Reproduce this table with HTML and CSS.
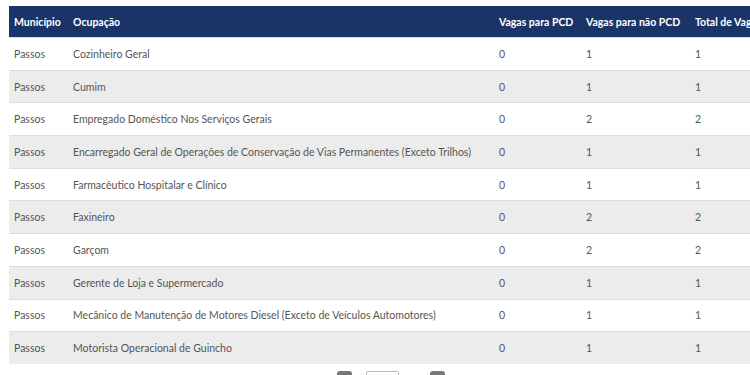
FILE: index.html
```html
<!DOCTYPE html>
<html lang="pt-BR">
<head>
<meta charset="utf-8">
<link rel="stylesheet" href="styles.css">
</head>
<body>
<div class="wrap">
<table class="grid">
<thead>
<tr><th class="c1"><span class="clip">Município</span></th><th class="c2">Ocupação</th><th class="c3">Vagas para PCD</th><th class="c4">Vagas para não PCD</th><th class="c5">Total de Vagas</th></tr>
</thead>
<tbody>
<tr><td>Passos</td><td>Cozinheiro Geral</td><td>0</td><td>1</td><td>1</td></tr>
<tr><td>Passos</td><td>Cumim</td><td>0</td><td>1</td><td>1</td></tr>
<tr><td>Passos</td><td>Empregado Doméstico Nos Serviços Gerais</td><td>0</td><td>2</td><td>2</td></tr>
<tr><td>Passos</td><td>Encarregado Geral de Operações de Conservação de Vias Permanentes (Exceto Trilhos)</td><td>0</td><td>1</td><td>1</td></tr>
<tr><td>Passos</td><td>Farmacêutico Hospitalar e Clínico</td><td>0</td><td>1</td><td>1</td></tr>
<tr><td>Passos</td><td>Faxineiro</td><td>0</td><td>2</td><td>2</td></tr>
<tr><td>Passos</td><td>Garçom</td><td>0</td><td>2</td><td>2</td></tr>
<tr><td>Passos</td><td>Gerente de Loja e Supermercado</td><td>0</td><td>1</td><td>1</td></tr>
<tr><td>Passos</td><td>Mecânico de Manutenção de Motores Diesel (Exceto de Veículos Automotores)</td><td>0</td><td>1</td><td>1</td></tr>
<tr><td>Passos</td><td>Motorista Operacional de Guincho</td><td>0</td><td>1</td><td>1</td></tr>
</tbody>
</table>
<div class="pager">
<span class="pbtn"></span>
<span class="pinput"></span>
<span class="pbtn next"></span>
</div>
</div>
</body>
</html>
```
FILE: styles.css
```css
html, body { margin: 0; padding: 0; background: #fff; overflow: hidden; }
body { width: 750px; height: 375px; font-family: "Lato", "Liberation Sans", sans-serif; }
.wrap { padding: 6px 0 0 9px; width: 820px; }
.grid { border-collapse: collapse; width: 820px; table-layout: fixed; font-size: 10.5px; color: #555; }
.grid th { background: #1b3467; color: #fff; font-weight: 700; text-align: left; height: 31px; padding: 0 0 0 5px; white-space: nowrap; overflow: hidden; }
.grid td { height: 31.7px; padding: 0 0 0 5px; border-top: 1px solid #dcdcdc; white-space: nowrap; }
.grid tbody tr:nth-child(even) td { background: #ececec; }
.c1 { width: 54px; }
.c2 { width: 421px; }
.c3 { width: 82px; }
.c4 { width: 104px; }
.c5 { width: 145px; }
.clip { display: block; overflow: hidden; width: 50px; }
.pager { display: flex; align-items: flex-start; padding: 7px 0 0 328px; gap: 14px; }
.pbtn { width: 15px; height: 12px; background: #777; border-radius: 3px; }
.pinput { width: 31px; height: 12px; border: 1px solid #bbb; border-radius: 2px; background: #fff; }
.next { margin-left: 17px; }
```
